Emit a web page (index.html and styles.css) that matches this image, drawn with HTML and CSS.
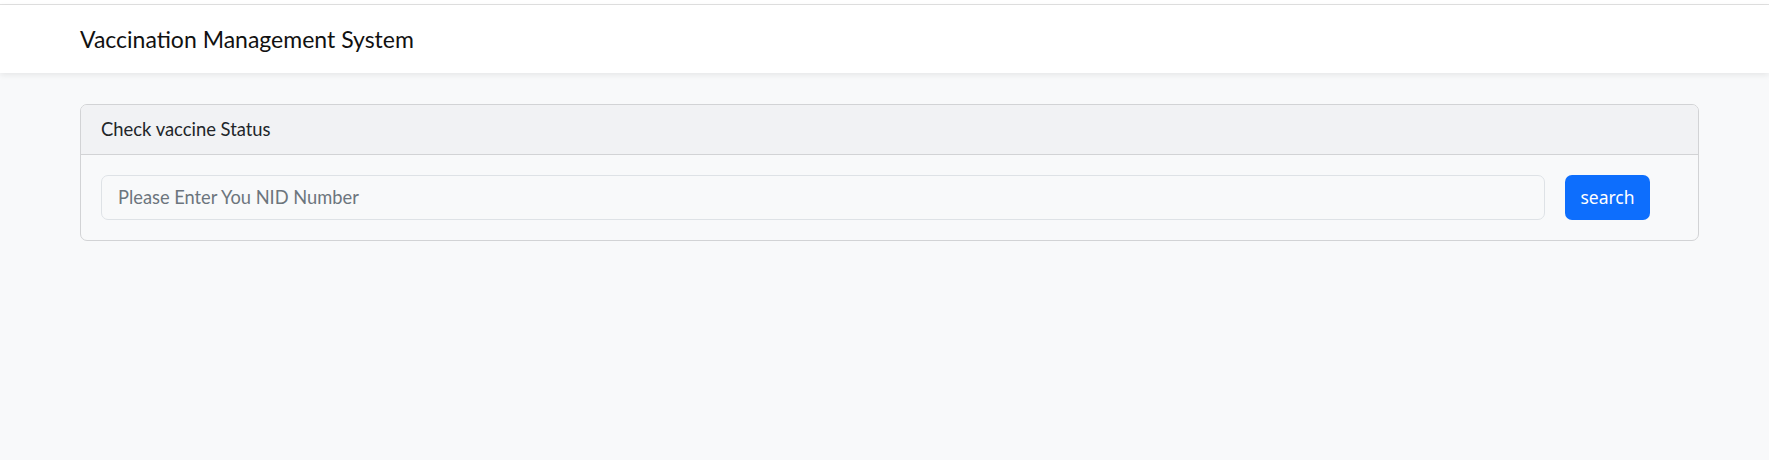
FILE: index.html
```html
<!DOCTYPE html>
<html lang="en">
<head>
<meta charset="utf-8">
<title>Vaccination Management System</title>
<link rel="stylesheet" href="styles.css">
</head>
<body>
<div class="topline"></div>
<nav class="navbar">
  <span class="brand">Vaccination Management System</span>
</nav>
<main class="container">
  <section class="card">
    <div class="card-header">Check vaccine Status</div>
    <div class="card-body">
      <input class="form-control" type="text" placeholder="Please Enter You NID Number">
      <button class="btn" type="button">search</button>
    </div>
  </section>
</main>
</body>
</html>
```
FILE: styles.css
```css
html, body {
  margin: 0;
  padding: 0;
}
body {
  background: #f8f9fa;
  color: #212529;
  font-family: Lato, "Noto Sans", sans-serif;
  min-height: 460px;
}
.topline {
  height: 4px;
  background: #ffffff;
  border-bottom: 1px solid #e1e1e1;
}
.navbar {
  height: 68px;
  background: #ffffff;
  display: flex;
  align-items: center;
  padding: 0 80px;
  box-shadow: 0 2px 6px rgba(0, 0, 0, 0.08);
  position: relative;
}
.brand {
  font-size: 23px;
  color: #111;
}
.container {
  padding: 31px 70px 0 80px;
}
.card {
  border: 1px solid #d2d3d5;
  border-radius: 7px;
  background: #f8f9fa;
  overflow: hidden;
}
.card-header {
  height: 50px;
  box-sizing: border-box;
  display: flex;
  align-items: center;
  padding: 0 20px 2px;
  background: #f1f2f4;
  border-bottom: 1px solid #d2d3d5;
  font-size: 18.4px;
}
.card-body {
  display: flex;
  align-items: center;
  gap: 20px;
  padding: 20px 48px 20px 20px;
}
.form-control {
  flex: 1;
  height: 45px;
  box-sizing: border-box;
  border: 1px solid #dee2e6;
  border-radius: 7px;
  background: #f8f9fa;
  padding: 0 16px 2px;
  font-family: Lato, "Noto Sans", sans-serif;
  font-size: 18.3px;
  color: #212529;
}
.form-control::placeholder {
  color: #6c757d;
}
.btn {
  width: 85px;
  height: 45px;
  border: none;
  border-radius: 7px;
  background: #0d6efd;
  color: #fff;
  font-family: "Noto Sans", sans-serif;
  font-size: 17.5px;
  padding: 0 0 2px;
}
```
